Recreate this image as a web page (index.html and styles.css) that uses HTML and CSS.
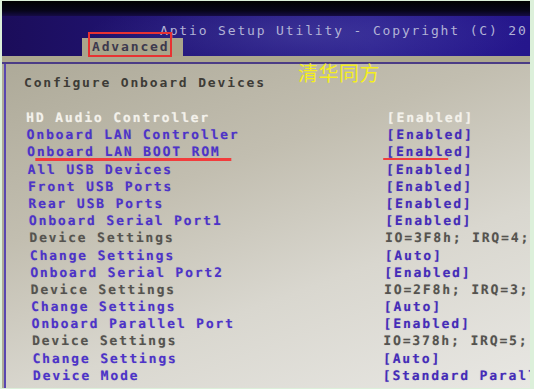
FILE: index.html
```html
<!DOCTYPE html>
<html lang="zh">

<head>
    <meta charset="UTF-8">
    <meta name="viewport" content="width=device-width, initial-scale=1.0">
    <title>Aptio Setup Utility - Advanced</title>
    <link rel="stylesheet" href="styles.css">
</head>

<body>
    <div class="photo">
        <div class="bezel"></div>
        <header class="titlebar">
            <div class="title">Aptio Setup Utility - Copyright (C) 20</div>
            <div class="tabs">
                <span class="tab">Advanced</span>
            </div>
        </header>
        <div class="rule"></div>
        <div class="panel">
            <div class="heading-row">
                <h1>Configure Onboard Devices</h1>
                <span class="brand">清华同方</span>
            </div>
            <div class="menu">
                <ul class="labels">
                    <li class="selected">HD Audio Controller</li>
                    <li>Onboard LAN Controller</li>
                    <li class="marked">Onboard LAN BOOT ROM</li>
                    <li>All USB Devices</li>
                    <li>Front USB Ports</li>
                    <li>Rear USB Ports</li>
                    <li>Onboard Serial Port1</li>
                    <li class="info">Device Settings</li>
                    <li>Change Settings</li>
                    <li>Onboard Serial Port2</li>
                    <li class="info">Device Settings</li>
                    <li>Change Settings</li>
                    <li>Onboard Parallel Port</li>
                    <li class="info">Device Settings</li>
                    <li>Change Settings</li>
                    <li>Device Mode</li>
                </ul>
                <ul class="values">
                    <li class="selected">[Enabled]</li>
                    <li>[Enabled]</li>
                    <li class="marked">[Enabled]</li>
                    <li>[Enabled]</li>
                    <li>[Enabled]</li>
                    <li>[Enabled]</li>
                    <li>[Enabled]</li>
                    <li class="info">IO=3F8h; IRQ=4;</li>
                    <li>[Auto]</li>
                    <li>[Enabled]</li>
                    <li class="info">IO=2F8h; IRQ=3;</li>
                    <li>[Auto]</li>
                    <li>[Enabled]</li>
                    <li class="info">IO=378h; IRQ=5;</li>
                    <li>[Auto]</li>
                    <li>[Standard Parallel Port]</li>
                </ul>
            </div>
        </div>
        <div class="tab-box"></div>
    </div>
</body>

</html>
```

FILE: styles.css
```css
body {
    margin: 0;
    padding: 1px 4px 1px 2px;
    height: 389px;
    box-sizing: border-box;
    background-color: #dcf0da;
    font-family: "DejaVu Sans Mono", "Liberation Mono", monospace;
    font-size: 13px;
    letter-spacing: 1.85px;
}

.photo {
    position: relative;
    display: flex;
    flex-direction: column;
    height: 387px;
    overflow: hidden;
    background-color: #aeaa98;
}

.bezel {
    height: 15px;
    background: linear-gradient(#020202, #07051a 65%, #150b45);
}

.titlebar {
    height: 40px;
    background:
        radial-gradient(ellipse 220px 40px at 58% 45%, rgba(110, 110, 190, 0.28), transparent),
        linear-gradient(90deg, #1b0d5a 0%, #22157a 35%, #2a1e8e 70%, #25168c 100%);
}

.title {
    padding: 6.5px 0 0 158px;
    line-height: 15px;
    color: #b2b3d6;
    white-space: nowrap;
}

.tabs {
    padding-left: 80px;
}

.tab {
    display: inline-block;
    padding: 1px 14px 3px 10px;
    line-height: 15px;
    background-color: #aaa58b;
    color: #3d3a4e;
    font-weight: bold;
}

.rule {
    height: 6px;
    background-color: #aca78f;
    border-bottom: 2px solid #4b3c86;
}

.panel {
    flex: 1;
    margin-left: 2px;
    padding-left: 18px;
    border-left: 2px solid #5846b0;
    background: linear-gradient(160deg, #aeaa99 0%, #c2beb0 35%, #d9d7cf 65%, #e8e7e3 100%);
}

.heading-row {
    display: flex;
    align-items: flex-start;
    height: 27px;
}

.heading-row h1 {
    margin: 10px 0 0;
    font-size: 13px;
    font-weight: bold;
    line-height: 17px;
    color: #3e3c37;
}

.brand {
    margin: -2px 0 0 32px;
    font-family: "Noto Sans CJK SC", sans-serif;
    font-size: 20px;
    line-height: 22px;
    letter-spacing: 0.5px;
    color: #f4ee1e;
}

.menu {
    display: flex;
    margin-top: 18.4px;
    padding-left: 2px;
}

.menu ul {
    margin: 0;
    padding: 0;
    list-style: none;
    font-weight: bold;
    line-height: 17.18px;
    white-space: nowrap;
    transform-origin: top left;
}

.labels {
    flex-shrink: 0;
    width: 361px;
    color: #4d33c8;
    transform: skewX(1.5deg);
}

.values {
    flex-shrink: 0;
    color: #452cb8;
    transform: skewX(-0.9deg);
}

.menu li {
    position: relative;
    text-shadow: 0 0 1px rgba(60, 40, 170, 0.3);
}

.menu li.selected {
    color: #f3f1ea;
    text-shadow: 0 0 1px rgba(255, 255, 255, 0.4);
}

.menu li.info {
    color: #55534f;
    text-shadow: 0 0 1px rgba(80, 80, 80, 0.25);
}

.labels li.marked::after,
.values li.marked::after {
    content: "";
    position: absolute;
    top: 14.5px;
    height: 3px;
    background-color: #f23c3c;
}

.labels li.marked::after {
    left: 7.5px;
    width: 196px;
}

.values li.marked::after {
    left: -3px;
    width: 65px;
    height: 2.5px;
}

.tab-box {
    position: absolute;
    left: 86px;
    top: 31px;
    width: 80px;
    height: 21px;
    border: 2px solid #e83232;
}
```
